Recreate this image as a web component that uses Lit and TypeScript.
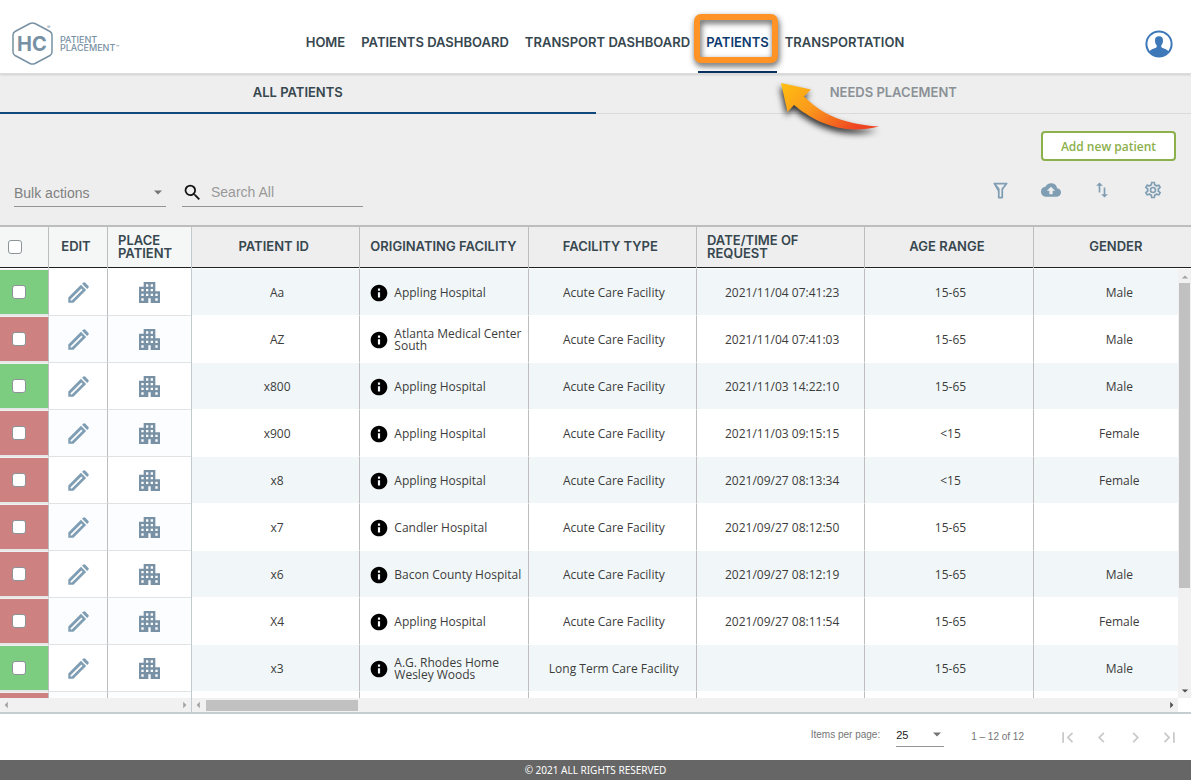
import { LitElement, html, css } from "lit";
import { customElement, property } from "lit/decorators.js";

const patients = [
  { id: "Aa", ok: true, facility: "Appling Hospital", type: "Acute Care Facility", date: "2021/11/04 07:41:23", age: "15-65", gender: "Male" },
  { id: "AZ", ok: false, facility: "Atlanta Medical Center South", type: "Acute Care Facility", date: "2021/11/04 07:41:03", age: "15-65", gender: "Male" },
  { id: "x800", ok: true, facility: "Appling Hospital", type: "Acute Care Facility", date: "2021/11/03 14:22:10", age: "15-65", gender: "Male" },
  { id: "x900", ok: false, facility: "Appling Hospital", type: "Acute Care Facility", date: "2021/11/03 09:15:15", age: "<15", gender: "Female" },
  { id: "x8", ok: false, facility: "Appling Hospital", type: "Acute Care Facility", date: "2021/09/27 08:13:34", age: "<15", gender: "Female" },
  { id: "x7", ok: false, facility: "Candler Hospital", type: "Acute Care Facility", date: "2021/09/27 08:12:50", age: "15-65", gender: "" },
  { id: "x6", ok: false, facility: "Bacon County Hospital", type: "Acute Care Facility", date: "2021/09/27 08:12:19", age: "15-65", gender: "Male" },
  { id: "X4", ok: false, facility: "Appling Hospital", type: "Acute Care Facility", date: "2021/09/27 08:11:54", age: "15-65", gender: "Female" },
  { id: "x3", ok: true, facility: "A.G. Rhodes Home Wesley Woods", type: "Long Term Care Facility", date: "", age: "15-65", gender: "Male" },
  { id: "", ok: false, facility: "", type: "", date: "", age: "", gender: "" },
];

const paths: Record<string, string> = {
  info: "M12 2C6.480 2 2 6.480 2 12s4.480 10 10 10 10-4.480 10-10S17.520 2 12 2zm1.300 15.500h-2.600V11h2.600zm0-8.300h-2.600V6.600h2.600z",
  magnifier: "M15.500 14h-.79l-.28-.27A6.470 6.470 0 0 0 16 9.500 6.500 6.500 0 1 0 9.500 16c1.610 0 3.090-.59 4.230-1.570l.27.28v.79l5 4.990L20.490 19zm-6 0C7.010 14 5 11.990 5 9.500S7.010 5 9.500 5 14 7.010 14 9.500 11.990 14 9.500 14z",
  filter: "M15 19.880c.04.3-.06.62-.29.83a1 1 0 0 1-.71.29h-4a1 1 0 0 1-1-1v-7.130L4.210 4.620A1 1 0 0 1 5 3h14a1 1 0 0 1 .79 1.620L15 10.750zM7.040 5L11 10.060V19h2v-8.950L16.960 5z",
  upload: "M19.350 10.040A7.490 7.490 0 0 0 12 4C9.110 4 6.600 5.640 5.350 8.040A5.994 5.994 0 0 0 0 14c0 3.310 2.690 6 6 6h13c2.760 0 5-2.240 5-5 0-2.640-2.050-4.780-4.650-4.960zM14 13v4h-4v-4H7l5-5 5 5z",
  sort: "M9 3L5 7h3v8h2V7h3zM16 17V9h-2v8h-3l4 4 4-4z",
  gear: "M12 8a4 4 0 1 1 0 8 4 4 0 0 1 0-8m0 2a2 2 0 1 0 0 4 2 2 0 0 0 0-4m-2 12c-.25 0-.46-.18-.5-.42l-.37-2.650c-.63-.25-1.170-.59-1.690-.99l-2.490 1.010c-.22.08-.49 0-.61-.22l-2-3.460a.493.493 0 0 1 .12-.64l2.110-1.660L4.500 12l.07-1-2.110-1.630a.493.493 0 0 1-.12-.64l2-3.460c.12-.22.39-.31.61-.22l2.490 1c.52-.39 1.060-.73 1.690-.98l.37-2.650c.04-.24.25-.42.5-.42h4c.25 0 .46.18.5.42l.37 2.650c.63.25 1.170.59 1.690.98l2.490-1c.22-.09.49 0 .61.22l2 3.460c.13.22.07.49-.12.64L19.430 11l.07 1-.07 1 2.110 1.630c.19.15.25.42.12.64l-2 3.460c-.12.22-.39.31-.61.22l-2.490-1c-.52.39-1.060.73-1.690.98l-.37 2.650c-.04.24-.25.42-.5.42zm1.250-18l-.37 2.610c-1.200.25-2.260.89-3.030 1.780L5.440 7.350l-.75 1.300L6.800 10.200a5.550 5.550 0 0 0 0 3.600l-2.120 1.560.75 1.300 2.430-1.040c.77.88 1.820 1.520 3.010 1.760l.37 2.620h1.520l.37-2.610c1.190-.25 2.240-.89 3.010-1.770l2.430 1.040.75-1.300-2.120-1.550c.4-1.170.4-2.440 0-3.610l2.110-1.550-.75-1.300-2.410 1.040a5.420 5.420 0 0 0-3.030-1.770L12.750 4z",
  first: "M18.410 16.590L13.820 12l4.590-4.590L17 6l-6 6 6 6zM6 6h2v12H6z",
  prev: "M15.410 7.410L14 6l-6 6 6 6 1.410-1.410L10.830 12z",
  next: "M10 6L8.590 7.410 13.170 12l-4.580 4.590L10 18l6-6z",
  last: "M5.590 7.410L10.180 12l-4.590 4.590L7 18l6-6-6-6zM16 6h2v12h-2z",
};

const icon = (name: string) =>
  html`<svg class="icon ${name}" viewBox="0 0 24 24" aria-hidden="true"><path fill-rule="evenodd" d=${paths[name]}></path></svg>`;

const pencil = html`<svg class="icon pencil" viewBox="0 0 22 22" aria-hidden="true">
  <path fill-rule="evenodd" d="M.3 21.700v-5.400L13.600 3l5.400 5.400L5.700 21.700zM2.700 18v1.300H4L15.300 8 14 6.700z"></path>
  <path d="M14.700 1.900L16.300.5q.8-.7 1.600.1l3.500 3.500q.8.800.1 1.600l-1.400 1.600z"></path>
</svg>`;

const building = html`<svg class="icon building" viewBox="3 3 18 18" aria-hidden="true">
  <path d="M17 11V3H7v4H3v14h8v-4h2v4h8V11h-4zM7 19H5v-2h2v2zm0-4H5v-2h2v2zm0-4H5V9h2v2zm4 4H9v-2h2v2zm0-4H9V9h2v2zm0-4H9V5h2v2zm4 8h-2v-2h2v2zm0-4h-2V9h2v2zm0-4h-2V5h2v2zm4 12h-2v-2h2v2zm0-4h-2v-2h2v2z"></path>
</svg>`;

const triangles: Record<string, string> = {
  left: "M6 1v8L2 5z",
  right: "M4 1v8l4-4z",
  up: "M1 7h8L5 3z",
  down: "M1 3h8L5 7z",
};
const triangle = (dir: string, cls = "") =>
  html`<svg class="tri ${cls}" viewBox="0 0 10 10" aria-hidden="true"><path d=${triangles[dir]}></path></svg>`;

const base = css`
  * { box-sizing: border-box; }
  button, input, select { font: inherit; color: inherit; margin: 0; }
  button { background: none; border: 0; padding: 0; cursor: pointer; }
  svg { display: block; }
  .icon { width: 20px; height: 20px; fill: currentColor; }
  .tri { width: 8px; height: 8px; fill: #505050; }
  .tri.muted { fill: #a3a3a3; }
`;

@customElement("site-header")
class SiteHeader extends LitElement {
  static styles = [base, css`
    :host { display: block; }
    .bar { display: grid; grid-template-columns: 1fr auto 1fr; height: 74px; align-items: center; background: #fff; border-bottom: 1px solid #dcdcdc; box-shadow: 0 1px 2px #0002; position: relative; }
    .logo { width: 112px; height: 48px; margin: 12px 0 0 10px; }
    .logo text { font-family: Inter, "Liberation Sans", sans-serif; fill: #7891a4; }
    nav { display: flex; align-self: stretch; margin-left: 19px; font: 600 13px/16px Inter, "Liberation Sans", sans-serif; color: #37474f; }
    nav a { color: inherit; text-decoration: none; padding: 34px 8px 0; white-space: nowrap; border-bottom: 2px solid transparent; position: relative; }
    nav a.active { color: #0d3b70; border-color: #0a3260; }
    .frame { position: absolute; left: -4px; top: 14px; width: 84px; height: 49px; border: 6px solid #ff9326; border-radius: 7px; filter: drop-shadow(1px 3px 3px #000a); pointer-events: none; }
    .arrow { position: absolute; left: 72px; top: 76px; width: 120px; height: 66px; z-index: 3; overflow: visible; filter: drop-shadow(-1px 4px 3px #000c); pointer-events: none; }
    .account { justify-self: end; margin: 14px 18px 0 0; color: #3d78b8; }
    .account svg { width: 28px; height: 28px; }
  `];
  render() {
    return html`<header class="bar">
      <svg class="logo" viewBox="0 0 112 48" role="img" aria-label="HC Patient Placement">
        <path d="M20 4.500q2.500-1.200 5 0l15 8q2 1.200 2 3.500v17q0 2.300-2 3.500l-15 8q-2.500 1.200-5 0l-15-8q-2-1.200-2-3.500V16q0-2.300 2-3.500z" fill="none" stroke="#7891a4" stroke-width="1.500"></path>
        <text x="7" y="32" font-size="20" font-weight="700">HC</text>
        <text x="37" y="10" font-size="5">®</text>
        <text font-size="9" font-weight="500"><tspan x="50" y="24">PATIENT</tspan><tspan x="50" y="32">PLACEMENT</tspan></text>
        <text x="106" y="30" font-size="5" font-weight="600">™</text>
      </svg>
      <nav aria-label="Main">
        <a href="#home">HOME</a>
        <a href="#patients-dashboard">PATIENTS DASHBOARD</a>
        <a href="#transport-dashboard">TRANSPORT DASHBOARD</a>
        <a href="#patients" class="active" aria-current="page">PATIENTS
          <span class="frame"></span>
          <svg class="arrow" viewBox="0 0 120 66" aria-hidden="true">
            <defs><linearGradient id="flame" x1="0" y1="0" x2="1" y2=".5"><stop offset="0" stop-color="#ffbf10"></stop><stop offset=".45" stop-color="#fb9a1c"></stop><stop offset="1" stop-color="#ee4422"></stop></linearGradient></defs>
            <path fill="url(#flame)" d="M11 7L41 13.500 34 20.500C49 35 68 48 109 50.500 72 60 43 45 24 29L17.500 36z"></path>
          </svg>
        </a>
        <a href="#transportation">TRANSPORTATION</a>
      </nav>
      <button class="account" aria-label="Account">
        <svg viewBox="0 0 28 28"><circle cx="14" cy="14" r="12.600" fill="none" stroke="currentColor" stroke-width="2"></circle><path fill="currentColor" d="M14 6.200c3 0 4.200 2 4 4.800-.1 2-.8 3.400-1.700 4.200v1.800c1 1.600 5 1.500 7.200 4.200C21 25 18 27 14 27s-7-2-9.500-5.800C6.700 18.500 10.700 18.600 11.700 17v-1.800C10.800 14.400 10.100 13 10 11c-.2-2.800 1-4.800 4-4.800z"></path></svg>
      </button>
    </header>`;
  }
}

@customElement("patient-toolbar")
class PatientToolbar extends LitElement {
  static styles = [base, css`
    :host { display: block; background: #eee; }
    .tabs { display: grid; grid-template-columns: 1fr 1fr; font: 600 13px/16px Inter, "Liberation Sans", sans-serif; color: #37474f; }
    .tabs button { height: 40px; padding-bottom: 3px; border-bottom: 1px solid #dadada; }
    .tabs button.on { padding-bottom: 2px; border-bottom: 2px solid #0f487c; }
    .tabs button.off { color: #8a9196; }
    .add-row { display: flex; justify-content: flex-end; padding: 17px 15px 0 0; }
    .add { width: 135px; height: 30px; padding-top: 1px; border: 2px solid #8bb04c; border-radius: 4px; background: #fff; color: #8bb04c; font: 600 12px/16px "Open Sans", sans-serif; }
    .tools { display: flex; align-items: center; padding: 14px 20px 18px 14px; height: 64px; font: 14px/20px "Liberation Sans", sans-serif; }
    .bulk { width: 152px; height: 31px; padding: 0 4px 0 0; display: flex; align-items: center; border-bottom: 1px solid #949494; color: #808080; }
    .bulk select { flex: 1; appearance: none; border: 0; background: none; padding: 4px 0 0; outline: 0; }
    .bulk svg { width: 8px; height: 5px; margin-top: 4px; fill: #757575; }
    .search { width: 181px; height: 31px; margin-left: 16px; display: flex; align-items: center; border-bottom: 1px solid #949494; }
    .magnifier { flex: none; width: 21px; height: 21px; margin-top: 4px; color: #111; }
    .search input { flex: 1; min-width: 0; border: 0; background: none; padding: 3px 0 0 8px; outline: 0; }
    .search input::placeholder { color: #999; opacity: 1; }
    .actions { margin: 0 0 2px auto; display: grid; grid-template-columns: repeat(4, 36px); column-gap: 15px; justify-items: center; color: #7f9db3; }
    .actions button { height: 24px; display: flex; align-items: center; }
    .actions .filter { width: 21px; height: 21px; }
  `];
  render() {
    return html`
      <div class="tabs" role="tablist">
        <button class="on" role="tab" aria-selected="true">ALL PATIENTS</button>
        <button class="off" role="tab" aria-selected="false">NEEDS PLACEMENT</button>
      </div>
      <div class="add-row"><button class="add">Add new patient</button></div>
      <div class="tools">
        <div class="bulk">
          <select aria-label="Bulk actions"><option>Bulk actions</option></select>
          <svg viewBox="0 0 10 5"><path d="M0 0h10L5 5z"></path></svg>
        </div>
        <label class="search">${icon("magnifier")}<input type="text" aria-label="Search All" placeholder="Search All" /></label>
        <div class="actions">
          <button aria-label="Filter">${icon("filter")}</button>
          <button aria-label="Upload">${icon("upload")}</button>
          <button aria-label="Sort">${icon("sort")}</button>
          <button aria-label="Settings">${icon("gear")}</button>
        </div>
      </div>`;
  }
}

@customElement("patient-grid")
class PatientGrid extends LitElement {
  @property({ attribute: false }) rows = patients;
  static styles = [base, css`
    :host { display: grid; grid-template-columns: 192px 1fr; min-height: 0; border-top: 2px solid #bdbdbd; border-bottom: 2px solid #c5cdd1; background: #fff; }
    .pane { display: grid; grid-template-rows: minmax(0, 1fr) 14px; min-width: 0; min-height: 0; position: relative; }
    .pane.frozen { border-right: 1px solid #c3cacd; }
    .view { overflow: hidden; min-height: 0; }
    table { border-collapse: separate; border-spacing: 0; table-layout: fixed; width: 100%; }
    .main table { min-width: 1010px; }
    th { height: 42px; padding: 0 10px 2px; background: #eee; border-bottom: 1px solid #fff; box-shadow: inset 0 -1px #212121; border-right: 1px solid #bdbdbd; font: 600 13px/13px Inter, "Liberation Sans", sans-serif; color: #37474f; white-space: nowrap; }
    .main th { padding-right: 14px; }
    th.wrap { text-align: left; white-space: normal; }
    .frozen th { background: #f5f7f7; }
    td { height: 47px; padding: 0 6px 0 9px; border-right: 1px solid #bdbdbd; border-bottom: 1px solid #fff; text-align: center; font: 12px/12px "Open Sans", sans-serif; color: #3c3c3c; }
    .main td { padding-top: 2px; }
    .main td.place { padding-right: 0; }
    tr > :last-child { border-right: 0; }
    .main tbody tr:nth-child(odd) { background: #f1f7f8; }
    .frozen td { border-bottom: 1px solid #dfe3e4; padding: 0; }
    .frozen tbody tr:nth-child(even) { background: #fbfdff; }
    .frozen td.ok, .frozen td.hold { background-clip: padding-box; border-top: 1px solid #f1f1f1; border-bottom: 2px solid #e6e8e8; padding-right: 11px; }
    .frozen td.ok { background-color: #7ccd7f; }
    .frozen td.hold { background-color: #cd8180; }
    .check { width: 49px; }
    .edit { width: 59px; }
    .frozen th.check { padding: 0 18px 2px 0; }
    .frozen th.edit { padding: 0 4px 2px 0; }
    input[type="checkbox"] { appearance: none; display: block; margin: 0 auto; width: 14px; height: 14px; border: 1px solid #8c9499; border-radius: 3px; background: #fff; }
    td button { color: #7f9db3; display: block; margin: 0 auto; }
    td .icon { width: 21px; height: 21px; }
    .building { color: #7891a5; }
    .facility { display: flex; align-items: center; gap: 5px; text-align: left; }
    .facility .info { flex: none; width: 20px; height: 20px; color: #000; }
    .hbar { display: flex; align-items: center; justify-content: space-between; background: #f1f1f1; padding: 0 3px; }
    .main .hbar { margin-right: 13px; gap: 3px; }
    .hbar .thumb { width: 152px; height: 11px; background: #c1c1c1; margin-right: auto; }
    .vbar { position: absolute; right: 0; top: 42px; bottom: 14px; width: 13px; display: flex; flex-direction: column; align-items: center; gap: 2px; background: #f1f1f1; padding: 4px 0 3px; }
    .vbar .thumb { width: 11px; height: 305px; background: #c1c1c1; }
    .vbar .down { margin-top: auto; }
  `];
  render() {
    return html`
      <div class="pane frozen">
        <div class="view"><table>
          <thead><tr>
            <th class="check"><input type="checkbox" aria-label="Select all" /></th>
            <th class="edit">EDIT</th>
            <th class="wrap">PLACE PATIENT</th>
          </tr></thead>
          <tbody>${this.rows.map((r) => html`<tr>
            <td class=${r.ok ? "ok" : "hold"}><input type="checkbox" aria-label="Select ${r.id}" /></td>
            <td><button aria-label="Edit ${r.id}">${pencil}</button></td>
            <td><button aria-label="Place ${r.id}">${building}</button></td>
          </tr>`)}</tbody>
        </table></div>
        <div class="hbar">${triangle("left", "muted")}${triangle("right", "muted")}</div>
      </div>
      <div class="pane main">
        <div class="view"><table>
          <thead><tr>
            <th>PATIENT ID</th><th>ORIGINATING FACILITY</th><th>FACILITY TYPE</th>
            <th class="wrap">DATE/TIME OF REQUEST</th><th>AGE RANGE</th><th>GENDER</th>
          </tr></thead>
          <tbody>${this.rows.map((r) => html`<tr>
            <td>${r.id}</td>
            <td class="place">${r.facility ? html`<div class="facility">${icon("info")}<span>${r.facility}</span></div>` : ""}</td>
            <td>${r.type}</td><td>${r.date}</td><td>${r.age}</td><td>${r.gender}</td>
          </tr>`)}</tbody>
        </table></div>
        <div class="hbar">${triangle("left", "muted")}<span class="thumb"></span>${triangle("right")}</div>
        <div class="vbar">${triangle("up", "muted")}<span class="thumb"></span>${triangle("down", "down")}</div>
      </div>`;
  }
}

@customElement("page-footer")
class PageFooter extends LitElement {
  static styles = [base, css`
    :host { display: block; }
    .pager { height: 46px; display: flex; align-items: center; justify-content: flex-end; padding: 0 11px 0 0; background: #fff; font: 10px/16px "Liberation Sans", sans-serif; color: #757575; }
    .size { display: flex; align-items: center; width: 48px; height: 23px; margin: 0 27px 4px 16px; border-bottom: 1px solid #949494; color: #222; font-size: 11px; }
    .size select { flex: 1; appearance: none; border: 0; background: none; padding: 0; outline: 0; }
    .size svg { width: 8px; height: 5px; fill: #757575; margin-right: 3px; }
    label { margin-bottom: 4px; }
    .steps { display: flex; gap: 13px; margin-left: 33px; color: #c9c9c9; }
    .steps .icon { width: 21px; height: 21px; }
    .copy { height: 20px; background: #666; color: #fff; text-align: center; font: 10px/21px "Noto Sans", sans-serif; }
  `];
  render() {
    return html`
      <div class="pager">
        <label for="size">Items per page:</label>
        <div class="size"><select id="size"><option>25</option></select><svg viewBox="0 0 10 5"><path d="M0 0h10L5 5z"></path></svg></div>
        <span>1 – 12 of 12</span>
        <div class="steps">
          <button aria-label="First page">${icon("first")}</button>
          <button aria-label="Previous page">${icon("prev")}</button>
          <button aria-label="Next page">${icon("next")}</button>
          <button aria-label="Last page">${icon("last")}</button>
        </div>
      </div>
      <footer class="copy">© 2021 ALL RIGHTS RESERVED</footer>`;
  }
}

@customElement("app-root")
class AppRoot extends LitElement {
  static styles = css`
    :host { display: flex; flex-direction: column; height: 100vh; overflow: hidden; background: #fff; }
    site-header { position: relative; z-index: 2; }
    patient-grid { flex: 1; }
  `;
  render() {
    return html`<site-header></site-header><patient-toolbar></patient-toolbar><patient-grid></patient-grid><page-footer></page-footer>`;
  }
}
